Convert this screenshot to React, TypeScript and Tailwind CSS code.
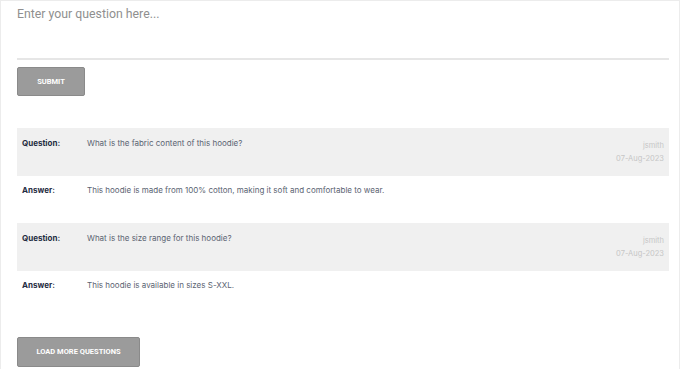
import React from "react";

const rows = [
  {
    q: "What is the fabric content of this hoodie?",
    a: "This hoodie is made from 100% cotton, making it soft and comfortable to wear.",
  },
  {
    q: "What is the size range for this hoodie?",
    a: "This hoodie is available in sizes S-XXL.",
  },
];

export default function App() {
  return (
    <div className="w-[680px] h-[369px] bg-white border-x border-t border-[#ececec] overflow-hidden box-border font-['Inter',sans-serif]">
      <div className="pl-4 pr-[10px]">
        <div className="h-[59px] border-b-2 border-[#e6e6e6] pt-[5px]">
          <div className="font-['Roboto',sans-serif] text-[12.3px] leading-[16px] text-[#8f8f8f]">
            Enter your question here...
          </div>
        </div>
        <div className="mt-[6px]">
          <button className="w-[68px] h-[29px] bg-[#9b9b9b] border border-[#8a8a8a] rounded-[2px] font-['Roboto',sans-serif] text-[7.5px] font-bold text-white">
            SUBMIT
          </button>
        </div>
        <div className="mt-[32px]">
          {rows.map((r, i) => (
            <div key={i}>
              <div className="h-[48px] bg-[#f0f0f0] flex">
                <div className="w-[70px] pl-[5px] pt-[9px] text-[8px] leading-[12px] font-bold text-[#1f2d42]">
                  Question:
                </div>
                <div className="flex-1 pt-[9px] text-[8px] leading-[12px] text-[#5b6472]">
                  {r.q}
                </div>
                <div className="pr-[5px] pt-[11px] text-right text-[7.5px] leading-[13px] text-[#c6c6c6]">
                  <div>jsmith</div>
                  <div>07-Aug-2023</div>
                </div>
              </div>
              <div className="h-[47px] flex">
                <div className="w-[70px] pl-[5px] pt-[8px] text-[8px] leading-[12px] font-bold text-[#1f2d42]">
                  Answer:
                </div>
                <div className="flex-1 pt-[8px] text-[8px] leading-[12px] text-[#5b6472]">
                  {r.a}
                </div>
              </div>
            </div>
          ))}
        </div>
        <div className="mt-[18px]">
          <button className="w-[123px] h-[30px] bg-[#9b9b9b] border border-[#8a8a8a] rounded-[2px] font-['Roboto',sans-serif] text-[7.5px] font-bold text-white">
            LOAD MORE QUESTIONS
          </button>
        </div>
      </div>
    </div>
  );
}
